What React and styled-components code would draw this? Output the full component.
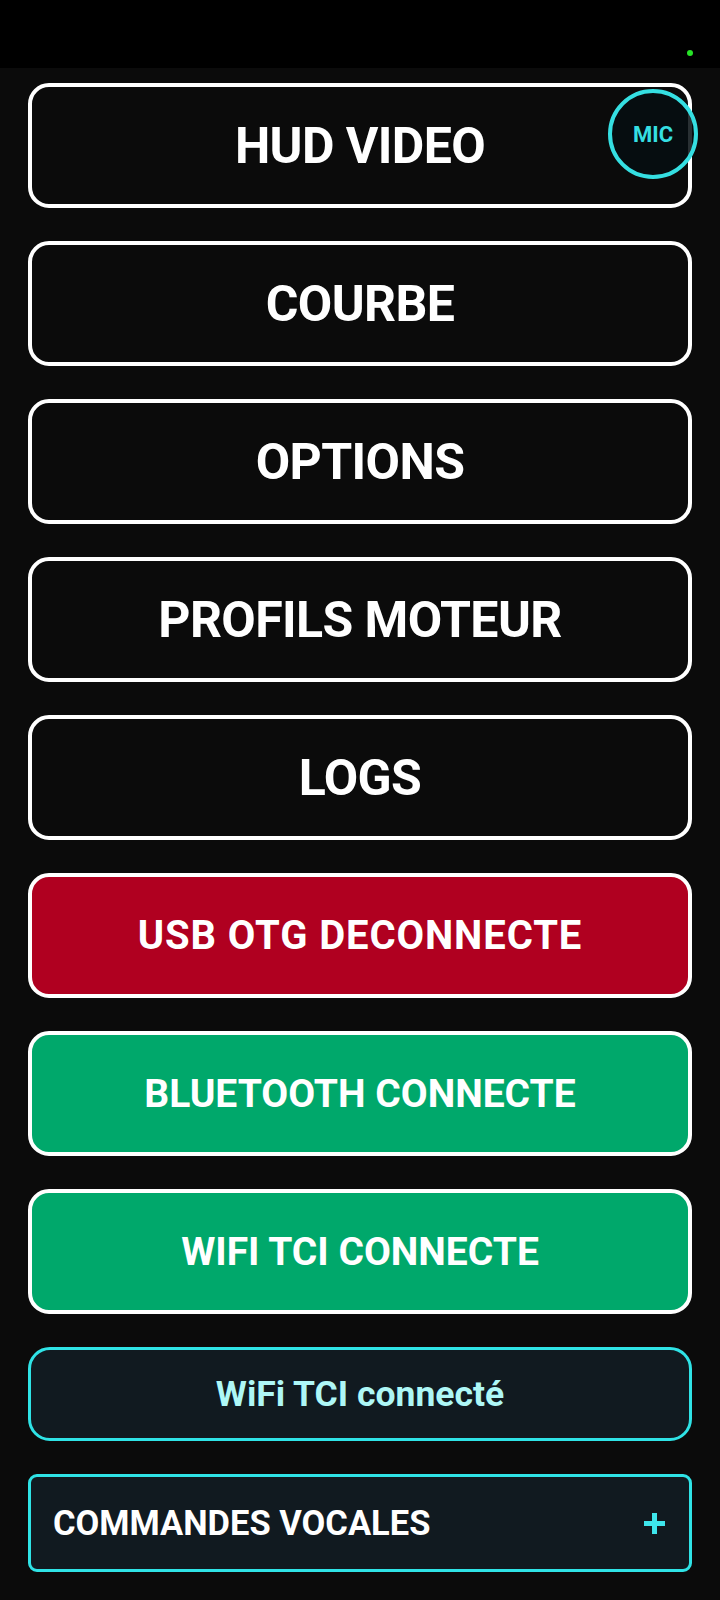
import React from "react";
import styled, { createGlobalStyle } from "styled-components";

const Global = createGlobalStyle`
  html, body { margin: 0; padding: 0; background: #0b0b0b; }
  body { font-family: Roboto, "Noto Sans", "Liberation Sans", sans-serif; }
  * { box-sizing: border-box; }
`;

const Screen = styled.div`
  width: 720px;
  min-height: 1600px;
  background: #0b0b0b;
  display: flex;
  flex-direction: column;
`;

const StatusBar = styled.div`
  height: 68px;
  background: #000;
  display: flex;
  justify-content: flex-end;
  align-items: flex-start;
  padding: 50px 27px 0 0;
`;

const Dot = styled.span`
  width: 6px;
  height: 6px;
  border-radius: 50%;
  background: #27e327;
`;

const List = styled.div`
  position: relative;
  display: flex;
  flex-direction: column;
  gap: 33px;
  padding: 15px 28px 0 28px;
`;

const fills = {
  dark: "#0b0b0b",
  red: "#b00020",
  green: "#00a86b",
};

const BigButton = styled.button`
  height: 125px;
  width: 100%;
  border: 4px solid #ffffff;
  border-radius: 21px;
  background: ${(p) => fills[p.$tone || "dark"]};
  color: #ffffff;
  font-family: Roboto, "Liberation Sans", sans-serif;
  font-weight: 700;
  font-size: ${(p) => p.$size || "50px"};
  letter-spacing: ${(p) => p.$spacing || "-0.6px"};
  display: flex;
  align-items: center;
  justify-content: center;
  padding: 0;
`;

const StatusBox = styled.div`
  height: 94px;
  border: 3px solid #2fe3e6;
  border-radius: 22px;
  background: #111a20;
  color: #aef7f6;
  font-weight: 700;
  font-size: 35.5px;
  display: flex;
  align-items: center;
  justify-content: center;
`;

const Accordion = styled.div`
  height: 98px;
  border: 3px solid #2fe3e6;
  border-radius: 9px;
  background: #111a20;
  display: flex;
  align-items: center;
  justify-content: space-between;
  padding: 0 24px 0 22px;
`;

const AccTitle = styled.span`
  color: #ffffff;
  font-weight: 700;
  font-size: 34.5px;
`;

const Plus = styled.span`
  position: relative;
  width: 21px;
  height: 21px;
  &::before, &::after {
    content: "";
    position: absolute;
    background: #3ee6ec;
  }
  &::before { left: 0; right: 0; top: 8px; height: 5px; }
  &::after { top: 0; bottom: 0; left: 8px; width: 5px; }
`;

const MicButton = styled.div`
  position: absolute;
  left: 608px;
  top: 21px;
  width: 90px;
  height: 90px;
  border-radius: 50%;
  border: 4px solid #35dfe2;
  background: rgba(6, 14, 18, 0.86);
  color: #35dfe2;
  font-weight: 700;
  font-size: 22px;
  display: flex;
  align-items: center;
  justify-content: center;
`;

export default function App() {
  return (
    <Screen>
      <Global />
      <StatusBar>
        <Dot />
      </StatusBar>
      <List>
        <BigButton>HUD VIDEO</BigButton>
        <BigButton>COURBE</BigButton>
        <BigButton>OPTIONS</BigButton>
        <BigButton>PROFILS MOTEUR</BigButton>
        <BigButton>LOGS</BigButton>
        <BigButton $tone="red" $size="40px" $spacing="0.9px">USB OTG DECONNECTE</BigButton>
        <BigButton $tone="green" $size="39px" $spacing="0px">BLUETOOTH CONNECTE</BigButton>
        <BigButton $tone="green" $size="39px" $spacing="0px">WIFI TCI CONNECTE</BigButton>
        <StatusBox>WiFi TCI connecté</StatusBox>
        <Accordion>
          <AccTitle>COMMANDES VOCALES</AccTitle>
          <Plus />
        </Accordion>
        <MicButton>MIC</MicButton>
      </List>
    </Screen>
  );
}
